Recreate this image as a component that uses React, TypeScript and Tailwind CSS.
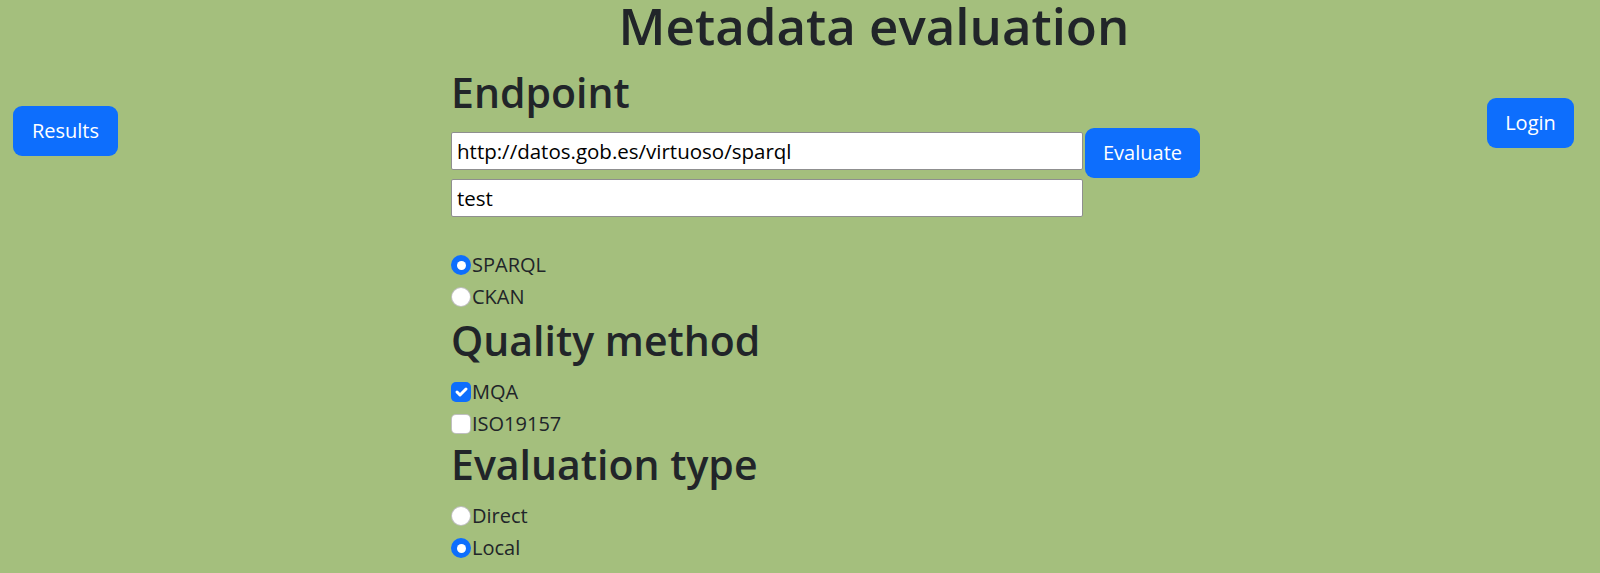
import { useState } from 'react'

function Radio({ checked }: { checked?: boolean }) {
  return checked ? (
    <span className="flex h-5 w-5 shrink-0 items-center justify-center rounded-full bg-[#0d6efd]">
      <span className="h-[9px] w-[9px] rounded-full bg-white" />
    </span>
  ) : (
    <span className="h-5 w-5 shrink-0 rounded-full border border-black/25 bg-white" />
  )
}

function Checkbox({ checked }: { checked?: boolean }) {
  return checked ? (
    <span className="flex h-5 w-5 shrink-0 items-center justify-center rounded-[5px] bg-[#0d6efd]">
      <svg viewBox="0 0 20 20" className="h-5 w-5">
        <path d="m6 10 3 3 6-6" fill="none" stroke="#fff" strokeWidth="3" strokeLinecap="round" strokeLinejoin="round" />
      </svg>
    </span>
  ) : (
    <span className="h-5 w-5 shrink-0 rounded-[5px] border border-black/25 bg-white" />
  )
}

function Option({ children, control }: { children: string; control: React.ReactNode }) {
  return (
    <label className="flex h-[32px] items-center text-[20px] leading-[30px] text-[#212529]">
      {control}
      <span className="ml-[1px]">{children}</span>
    </label>
  )
}

export default function App() {
  const [source, setSource] = useState('SPARQL')
  const [evalType, setEvalType] = useState('Local')
  const [mqa, setMqa] = useState(true)
  const [iso, setIso] = useState(false)

  return (
    <div className="flex min-h-screen bg-[#a4bf7d] font-['Open_Sans',sans-serif] text-[#212529]">
      {/* Left */}
      <div className="w-[451px] shrink-0 pl-[13px] pt-[106px]">
        <button className="h-[50px] w-[105px] rounded-[9px] bg-[#0d6efd] text-[20px] text-white">Results</button>
      </div>

      {/* Main */}
      <div className="w-[846px] shrink-0">
        <h1 className="h-[48px] text-center text-[51px] leading-[50px] font-semibold">Metadata evaluation</h1>

        <h2 className="mt-[20px] text-[41px] leading-[48px] font-semibold">Endpoint</h2>
        <div className="mt-[12px] flex items-start">
          <input
            defaultValue="http://datos.gob.es/virtuoso/sparql"
            className="mt-[4px] h-[38px] w-[632px] rounded-[2px] border border-[#8f8f8f] bg-white px-[5px] text-[20.5px] text-black outline-none"
          />
          <button className="ml-[2px] h-[50px] w-[115px] rounded-[9px] bg-[#0d6efd] text-[20px] text-white">Evaluate</button>
        </div>
        <input
          defaultValue="test"
          className="mt-[1px] block h-[38px] w-[632px] rounded-[2px] border border-[#8f8f8f] bg-white px-[5px] text-[20.5px] text-black outline-none"
        />

        <div className="mt-[32px]">
          {['SPARQL', 'CKAN'].map(s => (
            <div key={s} onClick={() => setSource(s)}>
              <Option control={<Radio checked={source === s} />}>{s}</Option>
            </div>
          ))}
        </div>

        <h2 className="mt-[3px] text-[41px] leading-[48px] font-semibold">Quality method</h2>
        <div className="mt-[12px]">
          <div onClick={() => setMqa(!mqa)}>
            <Option control={<Checkbox checked={mqa} />}>MQA</Option>
          </div>
          <div onClick={() => setIso(!iso)}>
            <Option control={<Checkbox checked={iso} />}>ISO19157</Option>
          </div>
        </div>

        <h2 className="text-[41px] leading-[48px] font-semibold">Evaluation type</h2>
        <div className="mt-[12px]">
          {['Direct', 'Local'].map(t => (
            <div key={t} onClick={() => setEvalType(t)}>
              <Option control={<Radio checked={evalType === t} />}>{t}</Option>
            </div>
          ))}
        </div>
      </div>

      {/* Right */}
      <div className="flex flex-1 justify-end pr-[26px] pt-[98px]">
        <button className="h-[50px] w-[87px] rounded-[9px] bg-[#0d6efd] text-[20px] text-white">Login</button>
      </div>
    </div>
  )
}
